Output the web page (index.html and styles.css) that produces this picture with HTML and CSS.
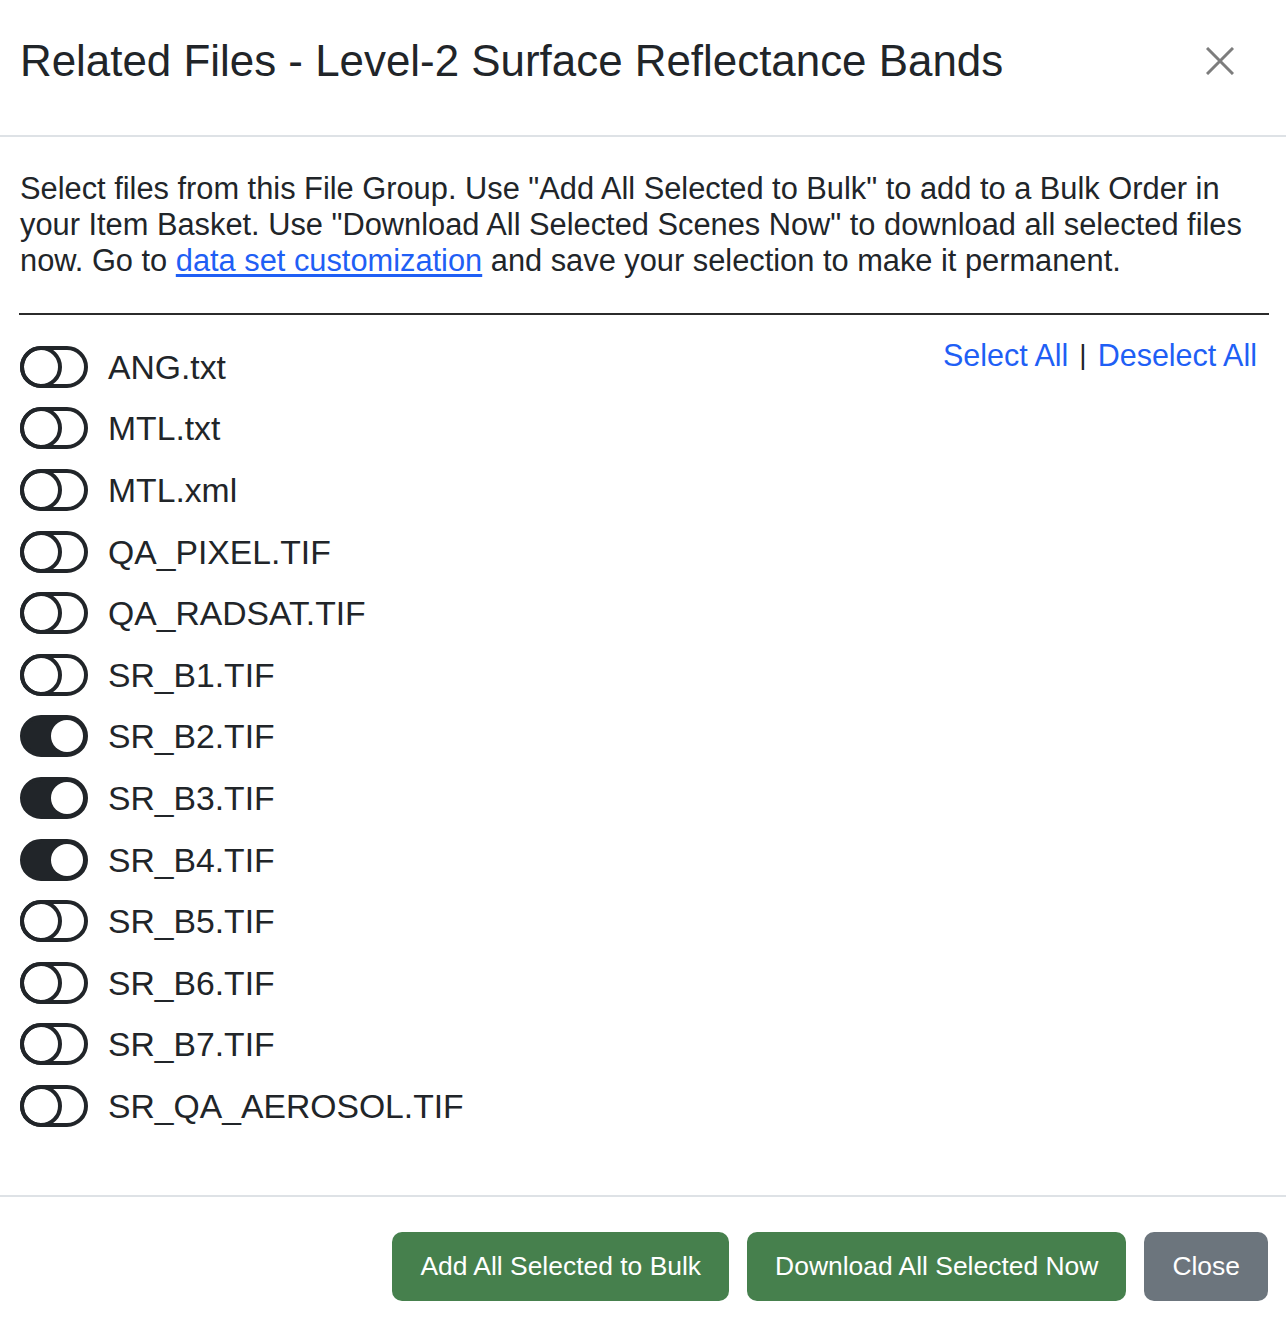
FILE: index.html
```html
<!DOCTYPE html>
<html lang="en">
<head>
<meta charset="utf-8">
<title>Related Files</title>
<link rel="stylesheet" href="styles.css">
</head>
<body>
<div class="modal">
  <div class="modal-header">
    <h4 class="modal-title">Related Files - Level-2 Surface Reflectance Bands</h4>
    <button class="btn-close" aria-label="Close">
      <svg width="28" height="28" viewBox="0 0 28 28"><path d="M1 1 L27 27 M27 1 L1 27" stroke="#7d7d7d" stroke-width="3" fill="none"/></svg>
    </button>
  </div>
  <div class="modal-body">
    <p class="intro">Select files from this File Group. Use "Add All Selected to Bulk" to add to a Bulk Order in your Item Basket. Use "Download All Selected Scenes Now" to download all selected files now. Go to <a href="#">data set customization</a> and save your selection to make it permanent.</p>
    <hr class="divider">
    <div class="files">
      <ul class="file-list">
        <li class="file"><span class="switch"></span><span class="name">ANG.txt</span></li>
        <li class="file"><span class="switch"></span><span class="name">MTL.txt</span></li>
        <li class="file"><span class="switch"></span><span class="name">MTL.xml</span></li>
        <li class="file"><span class="switch"></span><span class="name">QA_PIXEL.TIF</span></li>
        <li class="file"><span class="switch"></span><span class="name">QA_RADSAT.TIF</span></li>
        <li class="file"><span class="switch"></span><span class="name">SR_B1.TIF</span></li>
        <li class="file"><span class="switch on"></span><span class="name">SR_B2.TIF</span></li>
        <li class="file"><span class="switch on"></span><span class="name">SR_B3.TIF</span></li>
        <li class="file"><span class="switch on"></span><span class="name">SR_B4.TIF</span></li>
        <li class="file"><span class="switch"></span><span class="name">SR_B5.TIF</span></li>
        <li class="file"><span class="switch"></span><span class="name">SR_B6.TIF</span></li>
        <li class="file"><span class="switch"></span><span class="name">SR_B7.TIF</span></li>
        <li class="file"><span class="switch"></span><span class="name">SR_QA_AEROSOL.TIF</span></li>
      </ul>
      <div class="select-links"><a href="#">Select All</a><span class="sep">|</span><a href="#">Deselect All</a></div>
    </div>
  </div>
  <div class="modal-footer">
    <button class="btn btn-green">Add All Selected to Bulk</button>
    <button class="btn btn-green">Download All Selected Now</button>
    <button class="btn btn-gray">Close</button>
  </div>
</div>
</body>
</html>
```
FILE: styles.css
```css
*, *::before, *::after { box-sizing: border-box; }
html, body { margin: 0; padding: 0; background: #fff; }
body {
  font-family: "Liberation Sans", Arial, Helvetica, sans-serif;
  color: #212529;
  width: 1286px;
}
.modal { width: 1286px; }

.modal-header {
  display: flex;
  align-items: center;
  justify-content: space-between;
  height: 137px;
  padding: 0 52px 13px 20px;
  border-bottom: 2px solid #dee2e6;
}
.modal-title {
  margin: 0;
  font-size: 43.9px;
  font-weight: 400;
  line-height: 50px;
  color: #212529;
}
.btn-close {
  border: 0;
  background: transparent;
  padding: 0;
  width: 28px;
  height: 28px;
  display: flex;
}

.modal-body {
  padding: 34px 17px 58px 20px;
}
.intro {
  margin: 0;
  font-size: 30.8px;
  line-height: 36px;
  color: #212529;
}
.intro a { color: #1f5ff5; text-decoration: underline; text-underline-offset: 3px; }

.divider {
  margin: 34px 0 21px -1px;
  border: 0;
  border-top: 2px solid #2b2b2b;
  height: 0;
}

.files {
  display: flex;
  justify-content: space-between;
  align-items: flex-start;
}
.file-list {
  list-style: none;
  margin: 0;
  padding: 0;
}
.file {
  display: flex;
  align-items: center;
  gap: 20px;
  height: 61.6px;
}
.name {
  font-size: 33.7px;
  line-height: 40px;
  color: #212529;
}
.switch {
  position: relative;
  display: block;
  width: 68px;
  height: 42px;
  border: 4px solid #212529;
  border-radius: 21px;
  background: #fff;
}
.switch::before {
  content: "";
  position: absolute;
  left: -4px;
  top: -4px;
  width: 42px;
  height: 42px;
  border: 4px solid #212529;
  border-radius: 50%;
}
.switch.on { background: #212529; }
.switch.on::before {
  left: auto;
  right: 1px;
  top: 1px;
  width: 32px;
  height: 32px;
  border: 0;
  background: #fff;
}

.select-links {
  display: flex;
  align-items: center;
  font-size: 30.5px;
  line-height: 38px;
  padding-right: 12px;
}
.select-links a { color: #1f5ff5; text-decoration: none; }
.sep { color: #212529; margin: 0 11px; font-size: 28px; }

.modal-footer {
  display: flex;
  justify-content: flex-end;
  gap: 18px;
  padding: 35px 18px 31px;
  border-top: 2px solid #dee2e6;
}
.btn {
  height: 69px;
  padding: 0 28px;
  border: 0;
  border-radius: 10px;
  font-family: "Liberation Sans", Arial, Helvetica, sans-serif;
  font-size: 26.45px;
  color: #fff;
}
.btn-green { background: #46804d; }
.btn-gray { background: #6c757d; }
```
